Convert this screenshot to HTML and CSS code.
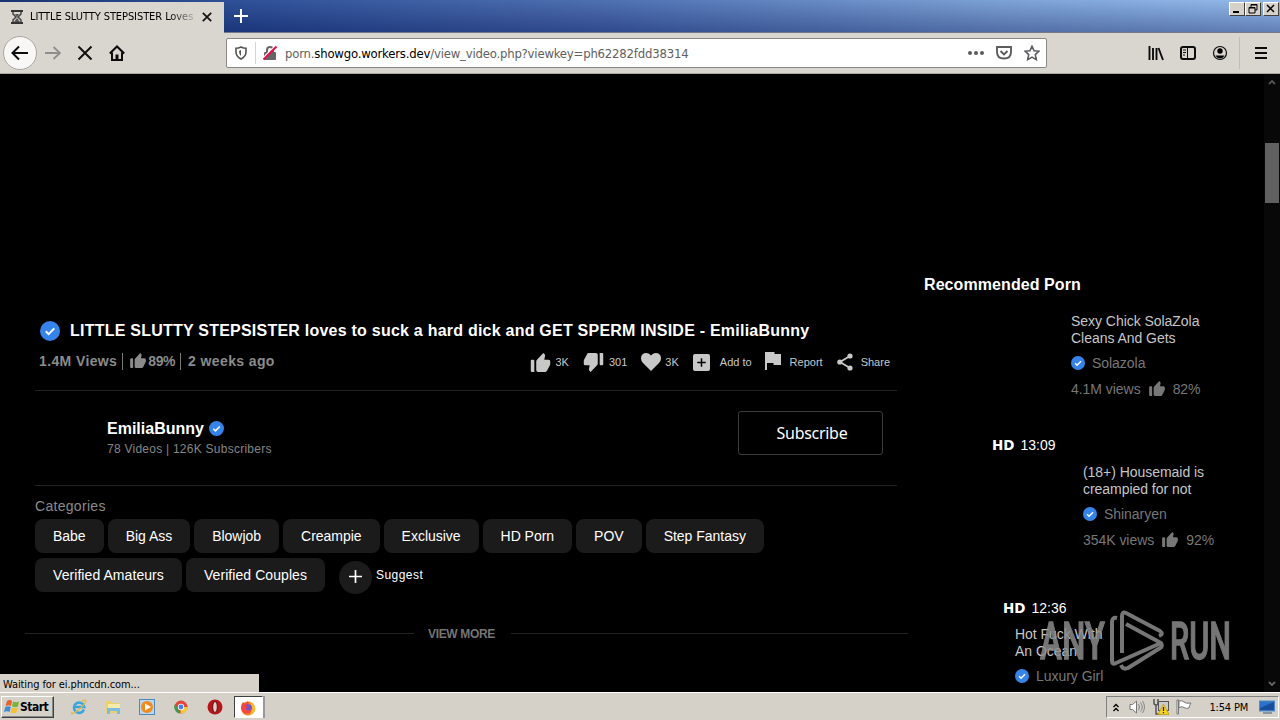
FILE: index.html
```html
<!DOCTYPE html>
<html lang="en">
<head>
    <meta charset="UTF-8">
    <title>view_video</title>
    <link rel="stylesheet" href="styles.css">
</head>
<body>
    <svg class="defs">
        <symbol id="check" viewBox="0 0 20 20"><circle cx="10" cy="10" r="10" fill="#3683e9"/><path d="M5.8 10.3l2.8 2.8 5.7-5.7" fill="none" stroke="#fff" stroke-width="2"/></symbol>
        <symbol id="thumb" viewBox="0 0 21 20"><path d="M0 8.5Q0 7 1.5 7H3q1 0 1 1.5V20H1.500Q0 20 0 18.500zM6 9q0-1 .8-1.800L13.500 0l1.500 1.500q.5.5.3 1.500L14.500 7H19q2 0 2 2v2q0 .6-.2 1L17.500 18.500Q16.800 20 15.500 20H8q-2 0-2-2z" fill="currentColor"/></symbol>
    </svg>
    <div class="tabbar">
        <div class="tab">
            <svg class="tab-icon" viewBox="0 0 12 14"><path d="M0 1h12M0 13h12" stroke="#333" stroke-width="2"/><path d="M2 2v2l3 3-3 3v2M10 2v2L7 7l3 3v2" fill="none" stroke="#444" stroke-width="1.500"/><path d="M4 4h4L6 7zM6 8l3 4H3z" fill="#555"/></svg>
            <span class="tab-title">LITTLE SLUTTY STEPSISTER Loves</span>
            <svg class="tab-close" viewBox="0 0 10 10"><path d="M.8.8l8.400 8.400M9.200.8L.8 9.200" stroke="#111" stroke-width="1.700"/></svg>
        </div>
        <svg class="tab-new" viewBox="0 0 14 14"><path d="M7 0v14M0 7h14" stroke="#fff" stroke-width="2"/></svg>
        <div class="win-btns">
            <div class="win-btn"><svg viewBox="0 0 14 12"><path d="M3 9h6" stroke="#000" stroke-width="2"/></svg></div>
            <div class="win-btn"><svg viewBox="0 0 14 12"><path d="M5 4V1.500h6V7H9M5 2h6M3 4.500h6V10H3zM3 5h6" fill="none" stroke="#000"/></svg></div>
            <div class="win-btn win-x"><svg viewBox="0 0 14 12"><path d="M3 2l7 7M10 2L3 9" stroke="#000" stroke-width="1.500"/></svg></div>
        </div>
    </div>
    <div class="toolbar">
        <div class="back"><svg width="18" height="16" viewBox="0 0 18 16"><path d="M17 8H2M8 1.500L1.500 8 8 14.500" fill="none" stroke="#0c0c0d" stroke-width="2"/></svg></div>
        <svg class="nav-icon" viewBox="0 0 16 16"><path d="M0 8h14M8.500 2L15 8l-6.500 6" fill="none" stroke="#908e8a" stroke-width="1.800"/></svg>
        <svg class="nav-icon" viewBox="0 0 16 16"><path d="M1.500 1.500l13 13M14.500 1.500l-13 13" stroke="#111" stroke-width="2"/></svg>
        <svg class="nav-icon" viewBox="0 0 16 16"><path d="M.8 8.500L8 1.500l7.200 7M3 7.500V15h10V7.500" fill="none" stroke="#0c0c0d" stroke-width="2"/><path d="M6.500 15V9.500h3V15" fill="#0c0c0d"/></svg>
        <div class="urlbar">
            <svg class="shield" viewBox="0 0 12 14"><path d="M6 1Q3.500 2.300 1 2.300V6q0 4.500 5 7 5-2.500 5-7V2.300Q8.500 2.300 6 1z" fill="none" stroke="#555" stroke-width="1.600"/><path d="M6 4v6Q4 8.500 4 5z" fill="#555"/></svg>
            <div class="url-sep"></div>
            <svg class="lock" viewBox="0 0 14 16"><path d="M4 8V5q0-3 3-3t3 3v3" fill="none" stroke="#666" stroke-width="2"/><rect x="1" y="7" width="12" height="8" rx="1" fill="#666"/><path d="M0 13.500L13 .5" stroke="#fff" stroke-width="2"/><path d="M.5 14.500L13.500 1.500" stroke="#e2124f" stroke-width="2"/></svg>
            <span class="url">porn.<b>showgo.workers.dev</b>/view_video.php?viewkey=ph62282fdd38314</span>
            <svg class="url-dots" viewBox="0 0 16 4"><circle cx="2" cy="2" r="2"/><circle cx="8" cy="2" r="2"/><circle cx="14" cy="2" r="2"/></svg>
            <svg class="url-icon" viewBox="0 0 16 16"><path d="M1 2h14v5q0 6.500-7 6.500T1 7zM4.500 6L8 9.500 11.500 6" fill="none" stroke="#5c5c5f" stroke-width="1.900"/></svg>
            <svg class="url-icon" viewBox="0 0 16 16"><path d="M8 1.200l2 4.500 5 .5-3.700 3.400 1 5L8 12.100l-4.300 2.500 1-5L1 6.200l5-.5z" fill="none" stroke="#5c5c5f" stroke-width="1.600"/></svg>
        </div>
        <div class="tools">
            <svg viewBox="0 0 16 16"><path d="M1.500 1v14M5 3v12M8.500 3v12M10.500 3l4.500 12" stroke="#0c0c0d" stroke-width="1.900"/></svg>
            <svg viewBox="0 0 16 16"><rect x="1" y="2" width="14" height="12" rx="2" fill="none" stroke="#0c0c0d" stroke-width="2"/><path d="M7.500 2v12M3 5h3M3 7.500h3M3 10h2" stroke="#0c0c0d"/></svg>
            <svg viewBox="0 0 16 16"><circle cx="8" cy="8" r="6.500" fill="none" stroke="#0c0c0d" stroke-width="1.200"/><circle cx="8" cy="6" r="2.700"/><path d="M3.500 10.500h9Q11 13.500 8 13.500t-4.500-3z"/></svg>
        </div>
        <div class="menu"><svg viewBox="0 0 12 12"><path d="M0 1h12M0 6h12M0 11h12" stroke="#0c0c0d" stroke-width="2"/></svg></div>
    </div>

    <div class="page">
        <div class="main">
            <h1 class="title"><svg class="title-check"><use href="#check"/></svg><span>LITTLE SLUTTY STEPSISTER loves to suck a hard dick and GET SPERM INSIDE - EmiliaBunny</span></h1>
            <div class="info">
                <div class="stats">
                    <span class="stat views">1.4M Views</span>
                    <span class="stat rating"><svg><use href="#thumb"/></svg>89%</span>
                    <span class="stat date">2 weeks ago</span>
                </div>
                <div class="actions">
                    <span class="action like"><svg viewBox="0 0 21 20"><use href="#thumb"/></svg>3K</span>
                    <span class="action dislike"><svg viewBox="0 0 21 20"><use href="#thumb"/></svg>301</span>
                    <span class="action fav"><svg viewBox="0 0 20 18"><path d="M10 18L2 10Q0 8 0 5.500 0 0 5.500 0 8.500 0 10 2.500 11.500 0 14.500 0 20 0 20 5.500 20 8 18 10z" fill="currentColor"/></svg>3K</span>
                    <span class="action add"><svg viewBox="0 0 18 18"><rect width="18" height="18" rx="2" fill="currentColor"/><path d="M9 4.500v9M4.500 9h9" stroke="#000" stroke-width="1.600"/></svg>Add to</span>
                    <span class="action report"><svg viewBox="0 0 16 18"><path d="M0 0h9.500v2H16v11H8.500v-2H2v7H0z" fill="currentColor"/></svg>Report</span>
                    <span class="action share"><svg viewBox="0 0 16 18"><path d="M13 3L3 9l10 6" fill="none" stroke="currentColor" stroke-width="1.800"/><circle cx="13" cy="3" r="2.600" fill="currentColor"/><circle cx="2.800" cy="9" r="2.600" fill="currentColor"/><circle cx="13" cy="15" r="2.600" fill="currentColor"/></svg>Share</span>
                </div>
            </div>
            <div class="user">
                <div>
                    <div class="user-name"><span>EmiliaBunny</span><svg><use href="#check"/></svg></div>
                    <div class="user-info">78 Videos | 126K Subscribers</div>
                </div>
                <button class="subscribe">Subscribe</button>
            </div>
            <div class="cat-label">Categories</div>
            <div class="cats">
                <span class="cat">Babe</span>
                <span class="cat">Big Ass</span>
                <span class="cat">Blowjob</span>
                <span class="cat">Creampie</span>
                <span class="cat">Exclusive</span>
                <span class="cat">HD Porn</span>
                <span class="cat">POV</span>
                <span class="cat">Step Fantasy</span>
            </div>
            <div class="cats cats-last">
                <span class="cat">Verified Amateurs</span>
                <span class="cat">Verified Couples</span>
                <span class="suggest"><svg viewBox="0 0 33 33"><circle cx="16.500" cy="16.500" r="16.500" fill="#1b1b1b"/><path d="M16.500 9v13M10 15.500h13" stroke="#fff" stroke-width="1.700"/></svg>Suggest</span>
            </div>
            <div class="more"><span>VIEW MORE</span></div>
        </div>

        <div class="side">
            <h2 class="side-title">Recommended Porn</h2>
            <div class="video video-1">
                <div class="video-title">Sexy Chick SolaZola<br>Cleans And Gets</div>
                <div class="video-user"><svg><use href="#check"/></svg>Solazola</div>
                <div class="video-stats">4.1M views<svg><use href="#thumb"/></svg>82%</div>
            </div>
            <div class="duration"><b>HD</b>13:09</div>
            <div class="video video-2">
                <div class="video-title">(18+) Housemaid is<br>creampied for not</div>
                <div class="video-user"><svg><use href="#check"/></svg>Shinaryen</div>
                <div class="video-stats">354K views<svg><use href="#thumb"/></svg>92%</div>
            </div>
            <div class="duration duration-2"><b>HD</b>12:36</div>
            <div class="video video-3">
                <div class="video-title">Hot Fuck With<br>An Ocean</div>
                <div class="video-user"><svg><use href="#check"/></svg>Luxury Girl</div>
            </div>
        </div>
        <div class="scrollbar">
            <svg viewBox="0 0 8 5"><path d="M1 4l3-3 3 3" fill="none" stroke="#555" stroke-width="1.800"/></svg>
            <div class="thumb"></div>
            <svg viewBox="0 0 8 5"><path d="M1 1l3 3 3-3" fill="none" stroke="#666" stroke-width="1.800"/></svg>
        </div>
        <div class="status">Waiting for ei.phncdn.com...</div>
        <svg class="watermark" width="200" height="66" viewBox="0 0 200 66">
            <text x="2" y="50" textLength="65" lengthAdjust="spacingAndGlyphs">ANY</text>
            <text x="132" y="50" textLength="61" lengthAdjust="spacingAndGlyphs">RUN</text>
            <g fill="none" stroke="#8b8b8b" stroke-width="4" stroke-linejoin="round">
                <path d="M84 44V7q0-5 4-3l34 18q4 3-1 5"/>
                <path d="M79 9q-5-1-5 4v39q0 4 4 2l45-20-35-19"/>
                <path d="M83 56q2 5 7 3l32-20q3-2 1-5"/>
            </g>
        </svg>
    </div>

    <div class="taskbar">
        <div class="start">
            <svg viewBox="0 0 16 16"><path d="M3 2q3-2 5 0L7 7q-2-1.500-5.500 0z" fill="#e8602c"/><path d="M9 2.500q3 1.500 6 0L14 7.500q-3 1.500-6 0z" fill="#79b440"/><path d="M1.300 8q3-1.500 5.500 0L5.500 13q-2.500-1.500-5.500 0z" fill="#3d8ed8"/><path d="M8 8.500q3 1.500 6 0l-1.500 5q-3 1.500-6 0z" fill="#f5c132"/></svg>Start
        </div>
        <div class="quick">
            <svg viewBox="0 0 16 16"><path d="M13 10.500A5.200 5.200 0 1 1 13.300 8H4" fill="none" stroke="#3ba6de" stroke-width="2.500"/><path d="M1 13Q-1 17 6 12T15 2q-1-2-5 1" fill="none" stroke="#e5b93c" stroke-width="1.200"/></svg>
            <svg viewBox="0 0 16 16"><path d="M1 2h5l1 2h7v10H1z" fill="#ecd06b"/><path d="M3 5h12v4H3z" fill="#f8eaa8"/><path d="M2 15V9h13v6h-3v-3H5v3z" fill="#78bde4"/></svg>
            <svg viewBox="0 0 16 16"><rect x=".5" y=".5" width="15" height="15" fill="#b8d6ec" stroke="#4d8bbd"/><circle cx="8" cy="8" r="6" fill="#f08a1c"/><path d="M6 4.500v7L12 8z" fill="#fff"/></svg>
            <svg viewBox="0 0 16 16"><circle cx="8" cy="8" r="6.500" fill="#e1473b"/><path d="M2 5l5 9.500A6.500 6.500 0 0 1 2 5z" fill="#31a350"/><path d="M8 8h6.500q0 6-7 6.500z" fill="#f6cb34"/><circle cx="8" cy="8" r="3.200" fill="#fff"/><circle cx="8" cy="8" r="2.400" fill="#4382ea"/></svg>
            <svg viewBox="0 0 16 16"><circle cx="8" cy="8" r="7.500" fill="#b4161c"/><ellipse cx="8" cy="8" rx="2.300" ry="5.500" fill="#ddd3c9" stroke="#6b0d10"/></svg>
        </div>
        <div class="task"><svg viewBox="0 0 16 16"><circle cx="8" cy="8.500" r="7" fill="#fb7a2e"/><path d="M1 9q-.5-4 2-7l2 2 3-3q-1 2 1 3l-3 3z" fill="#f6463f"/><path d="M9 0q1 2 3 3 3 2 3.500 6-1 5-6 6.500l3-7z" fill="#fbbd30"/><circle cx="8.500" cy="7.500" r="3.300" fill="#7551c4"/><path d="M3 5.500l4.500 1q-1 3-3 2 2 4 7 1-1 4-5 4t-5-5z" fill="#f6463f"/></svg></div>
        <div class="tray">
            <svg class="chev" viewBox="0 0 6 9"><path d="M.5 4L3 1.500 5.500 4M.5 8L3 5.500 5.500 8" fill="none" stroke="#000" stroke-width="1.300"/></svg>
            <svg class="tray-icon" viewBox="0 0 16 16"><path d="M1 5.500h2.500L7.500 2v12l-4-3.500H1z" fill="#fff" stroke="#777"/><path d="M9.500 5q2 3 0 6M11.500 3.500q3.500 4.500 0 9M13.500 2q4 6 0 12" fill="none" stroke="#888"/></svg>
            <svg class="tray-icon net" viewBox="0 0 16 16"><path d="M1 0v4q0 2 2 2t2-2V0M3 6v9h5" fill="none" stroke="#555" stroke-width="1.500"/><rect x="5.500" y="2.500" width="10" height="9" fill="#ccc" stroke="#555"/><path d="M10.500 5l5.500 10.500H5z" fill="#fbd51d" stroke="#b99500" stroke-width=".7"/><path d="M10.500 8v4M10.500 13v1.300" stroke="#222" stroke-width="1.300"/></svg>
            <svg class="tray-icon flag" viewBox="0 0 16 16"><path d="M1 1h1.500v14H1z" fill="#fff" stroke="#777"/><path d="M3 2q3-1 5 1t7 1q-2 3-2 5-3 1-5-.5T3 8.500z" fill="#fff" stroke="#777"/></svg>
            <span class="time">1:54 PM</span>
            <svg class="desktop" viewBox="0 0 16 14"><rect x=".5" y="1" width="15" height="10" fill="#2c73c8" stroke="#5189c2"/><path d="M1 8L15 2v8H1z" fill="#174e9d"/><path d="M4 13h9" stroke="#6c8296" stroke-width="1.500"/></svg>
        </div>
    </div>
</body>
</html>
```
FILE: styles.css
```css
* { margin: 0; padding: 0; box-sizing: border-box; }
body {
    width: 1280px;
    height: 720px;
    overflow: hidden;
    display: flex;
    flex-direction: column;
    background: #000;
    font-family: "Liberation Sans", Arial, sans-serif;
}
svg { display: block; flex-shrink: 0; }
.defs { display: none; }

/* browser chrome */
.tabbar {
    height: 33px;
    display: flex;
    border-bottom: 1px solid #75798a;
    background: linear-gradient(rgba(255,255,255,0.05), rgba(10,20,80,0.35)), linear-gradient(90deg, #0d2a6d 0, #244791 230px, #4568ad 600px, #769dd3 1000px, #8fb8ea 1280px);
}
.tab {
    width: 224px;
    height: 33px;
    margin-top: 2px;
    padding: 0 12px 4px 11px;
    display: flex;
    align-items: center;
    background: #d9d5cf;
}
.tab-icon { width: 12px; height: 14px; }
.tab-title {
    width: 165px;
    margin: 0 7px 0 7px;
    padding-top: 1px;
    overflow: hidden;
    white-space: nowrap;
    font: 11px/16px "DejaVu Sans Condensed", "DejaVu Sans", sans-serif;
    letter-spacing: -0.08px;
    color: #000;
    -webkit-mask-image: linear-gradient(90deg, #000 140px, transparent 170px);
    mask-image: linear-gradient(90deg, #000 140px, transparent 170px);
}
.tab-close { width: 10px; height: 10px; }
.tab-new { width: 14px; height: 14px; margin: 9px 0 0 10px; }
.win-btns { display: flex; margin: 2px 1px 0 auto; }
.win-btn {
    width: 16px;
    height: 14px;
    background: #d6d2ca;
    border: 1px solid;
    border-color: #fff #404040 #404040 #fff;
}
.win-x { margin-left: 2px; }
.toolbar {
    height: 41px;
    position: relative;
    display: flex;
    align-items: center;
    padding: 0 13px 1px 3px;
    background: #d9d5cf;
    border-bottom: 1px solid #aaa69f;
}
.back {
    width: 34px;
    height: 34px;
    display: flex;
    align-items: center;
    justify-content: center;
    border-radius: 50%;
    background: #f8f7f6;
    border: 1px solid #aaa7a2;
}
.nav-icon { width: 16px; height: 16px; margin-left: 16px; }
.back + .nav-icon { margin-left: 8px; }
.urlbar {
    width: 821px;
    height: 30px;
    margin-left: 101px;
    padding: 0 6px 0 8px;
    display: flex;
    align-items: center;
    background: #fff;
    border: 1px solid #8a8884;
    border-radius: 2px;
}
.shield { width: 12px; height: 14px; }
.url-sep { width: 1px; height: 22px; margin: 0 7px 0 8px; background: #d4d4d4; }
.lock { width: 14px; height: 16px; }
.url {
    margin: 0 auto 0 8px;
    padding-top: 2px;
    font: 13px/18px "DejaVu Sans Condensed", "DejaVu Sans", sans-serif;
    letter-spacing: -0.2px;
    color: #606060;
}
.url b { font-weight: normal; color: #000; }
.url-dots { width: 16px; height: 4px; margin-right: 12px; fill: #5c5c5f; }
.url-icon { width: 16px; height: 16px; }
.url-icon + .url-icon { margin-left: 12px; }
.tools { display: flex; gap: 16px; margin-left: auto; }
.tools svg { width: 16px; height: 16px; }
.menu { margin-left: 11px; padding: 10px 0 10px 15px; border-left: 1px solid #c2beb8; }
.menu svg { width: 12px; height: 12px; }

/* page */
.page {
    position: relative;
    height: 618px;
    display: flex;
    background: #000;
    overflow: hidden;
}
.main { width: 908px; padding: 245px 0 0 25px; }
.title {
    height: 24px;
    display: flex;
    align-items: center;
    margin-left: 15px;
    white-space: nowrap;
    font-size: 16px;
    letter-spacing: 0.23px;
    color: #fff;
}
.title-check { width: 20px; height: 20px; margin-right: 10px; }
.info {
    height: 48px;
    display: flex;
    justify-content: space-between;
    margin: 0 11px 0 10px;
    padding: 6px 7px 0 4px;
    border-bottom: 1px solid #222;
}
.stats { display: flex; height: 24px; align-items: center; }
.stat {
    display: flex;
    align-items: center;
    height: 17px;
    font-size: 14px;
    font-weight: bold;
    letter-spacing: 0.38px;
    color: #8b8b8b;
}
.stat + .stat { border-left: 1px solid #777; margin-left: 5px; padding-left: 7px; }
.stat svg { width: 16px; height: 15px; margin: -2px 2px 0 0; }
.stat.rating { letter-spacing: -0.4px; }
.actions { display: flex; height: 26px; align-items: center; }
.action {
    display: flex;
    align-items: center;
    font-size: 11px;
    line-height: 14px;
    color: #c8c8c8;
}
.action svg { width: 21px; height: 19px; margin-right: 5px; }
.dislike { margin-left: 14px; }
.dislike svg { transform: rotate(180deg); }
.fav { margin-left: 14px; }
.fav svg { width: 20px; height: 18px; margin-right: 4px; }
.add { margin-left: 14px; }
.add svg { width: 17px; height: 17px; margin-right: 10px; }
.report { margin-left: 13px; }
.report svg { width: 16px; height: 18px; margin: -3px 9px 0 0; }
.share { margin-left: 14px; }
.share svg { width: 16px; height: 18px; margin-right: 8px; }
.user {
    height: 95px;
    display: flex;
    justify-content: space-between;
    margin: 0 11px 0 10px;
    padding: 20px 14px 0 72px;
    border-bottom: 1px solid #222;
}
.user-name {
    display: flex;
    align-items: center;
    height: 20px;
    margin-top: 8px;
    font-size: 16px;
    font-weight: bold;
    color: #fff;
}
.user-name svg { width: 15px; height: 15px; margin: -1px 0 0 5px; }
.user-info { height: 20px; font-size: 12px; line-height: 21px; letter-spacing: 0.25px; color: #858585; }
.subscribe {
    width: 145px;
    height: 44px;
    padding-left: 3px;
    background: #000;
    border: 1px solid #3c3c3c;
    border-radius: 3px;
    font: 16px "Noto Sans", sans-serif;
    letter-spacing: -0.3px;
    color: #fff;
}
.cat-label { height: 33px; margin-left: 10px; padding-top: 10px; font-size: 14px; line-height: 20px; letter-spacing: 0.3px; color: #8b8b8b; }
.cats { display: flex; gap: 4px; margin-left: 10px; }
.cats-last { margin-top: 5px; }
.cat {
    height: 34px;
    padding: 0 18px;
    border-radius: 8px;
    background: #1b1b1b;
    font-size: 14px;
    line-height: 34px;
    letter-spacing: -0.02px;
    color: #fff;
}
.cats-last .cat { letter-spacing: 0.07px; }
.suggest {
    display: flex;
    align-items: center;
    height: 34px;
    margin-left: 10px;
    font-size: 12px;
    letter-spacing: 0.45px;
    color: #fff;
}
.suggest svg { width: 33px; height: 33px; margin: 4px 4px 0 0; }
.more {
    display: flex;
    align-items: center;
    margin-top: 32px;
    font-size: 12px;
    font-weight: bold;
    line-height: 18px;
    letter-spacing: -0.35px;
    color: #747474;
}
.more span { padding: 1px 16px 0 14px; }
.more::before { content: ''; width: 389px; height: 1px; background: #222; }
.more::after { content: ''; flex: 1; height: 1px; background: #222; }

.side { width: 356px; padding: 200px 0 0 16px; color: #c6c6c6; }
.side-title { font-size: 16px; line-height: 22px; letter-spacing: 0.08px; color: #fff; }
.video { font-size: 14px; letter-spacing: -0.04px; }
.video-1 { margin: 17px 0 0 147px; }
.video-2 { margin: 9px 0 0 159px; }
.video-3 { margin: 8px 0 0 91px; }
.video-title { line-height: 17px; }
.video-user { display: flex; align-items: center; height: 18px; margin-top: 7px; color: #777; }
.video-user svg { width: 14px; height: 14px; margin-right: 7px; }
.video-stats { display: flex; align-items: center; height: 18px; margin-top: 8px; color: #777; }
.video-stats svg { width: 16px; height: 15px; margin: -2px 8px 0; }
.duration { margin: 37px 0 0 68px; font-size: 14px; line-height: 20px; color: #fff; }
.duration b { margin-right: 6px; font-family: "DejaVu Sans", sans-serif; font-size: 13.500px; letter-spacing: 0; }
.duration-2 { margin: 49px 0 0 79px; }

.scrollbar {
    width: 16px;
    padding: 6px 0;
    display: flex;
    flex-direction: column;
    align-items: center;
    background: #080808;
}
.scrollbar svg { width: 8px; height: 5px; }
.thumb { width: 14px; height: 60px; margin: 58px 0 auto; background: #606060; }
.status {
    position: absolute;
    left: 0;
    bottom: 0;
    width: 259px;
    height: 18px;
    padding-left: 3px;
    background: #d6d2ca;
    font: 11px/21px "DejaVu Sans Condensed", "DejaVu Sans", sans-serif;
    letter-spacing: -0.1px;
    color: #000;
}
.watermark { position: absolute; left: 1038px; top: 535px; opacity: 0.85; }
.watermark text { font: 500 52px Roboto, sans-serif; fill: #8b8b8b; stroke: #8b8b8b; stroke-width: 1.300; }

/* taskbar */
.taskbar {
    height: 28px;
    display: flex;
    align-items: center;
    padding: 1px 1px 0;
    background: #d5d0c8;
    border-top: 1px solid #fff;
}
.start {
    width: 53px;
    height: 22px;
    padding-left: 2px;
    display: flex;
    align-items: center;
    border: 1px solid;
    border-color: #fff #404040 #404040 #fff;
    box-shadow: inset -1px -1px #888;
    font: bold 12px "DejaVu Sans Condensed", "DejaVu Sans", sans-serif;
    letter-spacing: -0.5px;
}
.start svg { width: 16px; height: 16px; }
.quick { display: flex; gap: 18px; margin-left: 17px; }
.quick svg { width: 16px; height: 16px; }
.task {
    width: 29px;
    height: 22px;
    margin-left: 11px;
    padding: 3px 0 0 5px;
    background: #fff;
    border: 1px solid;
    border-color: #404040 #fff #fff #404040;
    box-shadow: 2px 0 #999;
}
.task svg { width: 16px; height: 16px; }
.tray {
    width: 173px;
    height: 22px;
    margin-left: auto;
    padding: 0 3px 0 6px;
    display: flex;
    align-items: center;
    border: 1px solid;
    border-color: #808080 #fff #fff #808080;
}
.chev { width: 6px; height: 9px; }
.tray-icon { width: 16px; height: 16px; margin-left: 10px; }
.tray-icon.net { margin-left: 8px; }
.tray-icon.flag { margin-left: 7px; }
.time { margin-left: auto; font: 11px "DejaVu Sans Condensed", "DejaVu Sans", sans-serif; letter-spacing: -0.2px; }
.desktop { width: 16px; height: 14px; margin-left: 11px; }
```
